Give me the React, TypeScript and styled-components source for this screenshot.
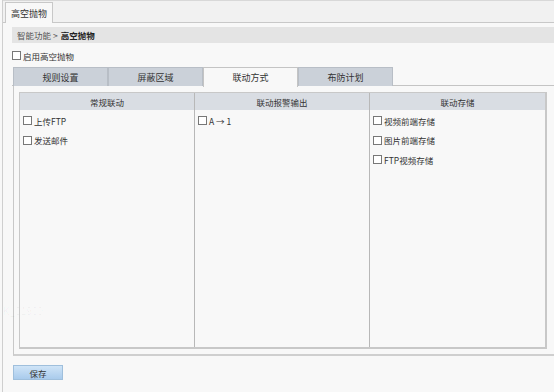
import React from "react";
import styled, { createGlobalStyle } from "styled-components";

const Global = createGlobalStyle`
  html, body { margin: 0; padding: 0; background: #f8f8f8; }
  body { font-family: "Noto Sans CJK SC", "DejaVu Sans", sans-serif; font-size: 9px; color: #222; }
  * { box-sizing: border-box; }
`;

const Page = styled.div`
  width: 554px;
  height: 392px;
  position: relative;
  overflow: hidden;
  background: #f8f8f8;
  border-left: 1px solid #cfcfcf;
  margin-left: 2px;
`;

const TopBar = styled.div`
  height: 23px;
  background: #f1f1f1;
  border-top: 1px solid #d8d8d8;
  border-bottom: 1px solid #c8c8c8;
  display: flex;
  align-items: flex-end;
  padding-left: 2px;
`;

const TopTab = styled.div`
  height: 21px;
  width: 48px;
  background: #f8f8f8;
  border: 1px solid #c8c8c8;
  border-bottom: none;
  margin-bottom: -1px;
  display: flex;
  align-items: center;
  justify-content: center;
  font-size: 9px;
  color: #333;
`;

const Content = styled.div`
  padding: 4px 0 0 9px;
  display: flex;
  flex-direction: column;
`;

const Crumb = styled.div`
  height: 16px;
  background: #e4e4e4;
  display: flex;
  align-items: center;
  padding-left: 5px;
  color: #555;
  font-size: 8.5px;
  b { color: #222; font-weight: bold; margin-left: 3px; }
`;

const Row = styled.label`
  display: flex;
  align-items: center;
  gap: 2px;
  height: 11px;
  font-size: 8.5px;
  color: #333;
`;

const Box = styled.span`
  width: 9px;
  height: 9px;
  border: 1px solid #777;
  background: #fff;
  display: inline-block;
  flex: none;
`;

const EnableRow = styled(Row)`
  margin-top: 7px;
`;

const Tabs = styled.div`
  margin-top: 6px;
  display: flex;
  height: 19px;
  border-bottom: 1px solid #c4c4c4;
  padding-left: 1px;
`;

const Tab = styled.div<{ $active?: boolean }>`
  width: 95px;
  height: 19px;
  display: flex;
  align-items: center;
  justify-content: center;
  font-size: 9px;
  color: #333;
  background: ${(p) => (p.$active ? "#f8f8f8" : "#cbd1d9")};
  border: 1px solid ${(p) => (p.$active ? "#c4c4c4" : "#b8bec6")};
  border-bottom: none;
  ${(p) => (p.$active ? "margin-bottom:-1px;height:20px;" : "")}
`;

const Panel = styled.div`
  height: 270px;
  margin-left: 1px;
  border: 1px solid #c8c8c8;
  border-top: none;
  border-right: none;
  border-bottom: 2px solid #cfcfcf;
  padding: 6px 10px 5px 5px;
  display: flex;
`;

const Table = styled.div`
  flex: 1;
  display: grid;
  grid-template-columns: 175px 175px 175px;
  border: 1px solid #c8c8c8;
  border-bottom: 2px solid #c8c8c8;
  border-right: 2px solid #c8c8c8;
`;

const Col = styled.div<{ $last?: boolean }>`
  display: flex;
  flex-direction: column;
  border-right: ${(p) => (p.$last ? "none" : "1px solid #b8b8b8")};
`;

const Head = styled.div`
  height: 17px;
  background: #d9dde3;
  display: flex;
  align-items: center;
  justify-content: center;
  font-size: 8.5px;
  color: #333;
`;

const Items = styled.div`
  display: flex;
  flex-direction: column;
  gap: 8.5px;
  padding: 5px 0 0 3px;
`;

const Footer = styled.div`
  padding: 9px 0 0 1px;
`;

const SaveBtn = styled.button`
  width: 50px;
  height: 15px;
  border: 1px solid #9fbfdc;
  background: linear-gradient(#cfe4f7, #a9cbec);
  font-family: inherit;
  font-size: 8.5px;
  color: #333;
  padding: 0;
  display: flex;
  align-items: center;
  justify-content: center;
`;

const Watermark = styled.div`
  position: absolute;
  left: 0;
  top: 306px;
  font-size: 10px;
  color: rgba(0, 0, 0, 0.04);
  font-family: "Liberation Sans", sans-serif;
`;

const Item = ({ text }: { text: string }) => (
  <Row>
    <Box />
    <span>{text}</span>
  </Row>
);

export default function App() {
  return (
    <>
      <Global />
      <Page>
        <TopBar>
          <TopTab>高空抛物</TopTab>
        </TopBar>
        <Content>
          <Crumb>
            智能功能 &gt;<b>高空抛物</b>
          </Crumb>
          <EnableRow>
            <Box />
            <span>启用高空抛物</span>
          </EnableRow>
          <Tabs>
            <Tab>规则设置</Tab>
            <Tab>屏蔽区域</Tab>
            <Tab $active>联动方式</Tab>
            <Tab>布防计划</Tab>
          </Tabs>
          <Panel>
            <Table>
              <Col>
                <Head>常规联动</Head>
                <Items>
                  <Item text="上传FTP" />
                  <Item text="发送邮件" />
                </Items>
              </Col>
              <Col>
                <Head>联动报警输出</Head>
                <Items>
                  <Item text="A → 1" />
                </Items>
              </Col>
              <Col $last>
                <Head>联动存储</Head>
                <Items>
                  <Item text="视频前端存储" />
                  <Item text="图片前端存储" />
                  <Item text="FTP视频存储" />
                </Items>
              </Col>
            </Table>
          </Panel>
          <Footer>
            <SaveBtn>保存</SaveBtn>
          </Footer>
        </Content>
        <Watermark>K_01900</Watermark>
      </Page>
    </>
  );
}
